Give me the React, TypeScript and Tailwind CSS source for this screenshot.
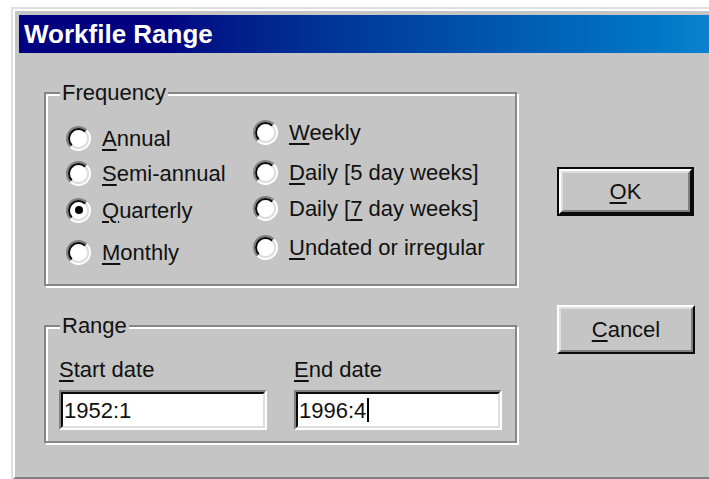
import React from 'react';

// Win95-style "Workfile Range" dialog

type Choice = { label: React.ReactNode; space: string; checked?: boolean };

function Key({ children }: { children: React.ReactNode }) {
  return <u className="underline decoration-2 underline-offset-[3px]">{children}</u>;
}

const leftChoices: Choice[] = [
  { label: <><Key>A</Key>nnual</>, space: 'mt-0' },
  { label: <><Key>S</Key>emi-annual</>, space: 'mt-[5px]' },
  { label: <><Key>Q</Key>uarterly</>, space: 'mt-[7px]', checked: true },
  { label: <><Key>M</Key>onthly</>, space: 'mt-[12px]' },
];

const rightChoices: Choice[] = [
  { label: <><Key>W</Key>eekly</>, space: 'mt-0' },
  { label: <><Key>D</Key>aily [5 day weeks]</>, space: 'mt-[10px]' },
  { label: <>Daily [<Key>7</Key> day weeks]</>, space: 'mt-[6px]' },
  { label: <><Key>U</Key>ndated or irregular</>, space: 'mt-[9px]' },
];

function Radio({ checked }: { checked?: boolean }) {
  return (
    <span className="flex h-[25px] w-[25px] shrink-0 rounded-full border-2 border-t-[#808080] border-l-[#808080] border-r-white border-b-white">
      <span className="flex flex-1 items-center justify-center rounded-full border-2 border-t-[#0a0a0a] border-l-[#0a0a0a] border-r-[#dfdfdf] border-b-[#dfdfdf] bg-white">
        {checked && <span className="h-[8px] w-[8px] rounded-full bg-black" />}
      </span>
    </span>
  );
}

function ChoiceRow({ c }: { c: Choice }) {
  return (
    <div className={`flex h-[30px] items-center gap-[11px] ${c.space}`}>
      <Radio checked={c.checked} />
      <span className="whitespace-nowrap">{c.label}</span>
    </div>
  );
}

function GroupBox({ title, children }: { title: string; children: React.ReactNode }) {
  return (
    <fieldset className="w-[473px] border-2 border-[#868686] shadow-[2px_2px_0_#fff,inset_2px_2px_0_#fff]">
      <legend className="ml-[14px] bg-[#c5c5c5] px-[2px] leading-[24px]">{title}</legend>
      {children}
    </fieldset>
  );
}

function DateField({ label, value, caret }: { label: React.ReactNode; value: string; caret?: boolean }) {
  return (
    <div className="flex flex-col">
      <span className="leading-[24px]">{label}</span>
      <div className="mt-[8px] flex h-[40px] w-[208px] border-2 border-t-[#808080] border-l-[#808080] border-r-white border-b-white">
        <div className="flex flex-1 items-center border-2 border-t-[#0a0a0a] border-l-[#0a0a0a] border-r-[#dfdfdf] border-b-[#dfdfdf] bg-white pl-[1px]">
          <span>{value}</span>
          {caret && <span className="ml-[1px] h-[24px] w-[2px] bg-black" />}
        </div>
      </div>
    </div>
  );
}

function Button({ children, isDefault }: { children: React.ReactNode; isDefault?: boolean }) {
  const bevel = (
    <div className="flex flex-1 border-2 border-t-white border-l-white border-r-[#0a0a0a] border-b-[#0a0a0a]">
      <div className="flex flex-1 items-center justify-center border-2 border-t-[#dfdfdf] border-l-[#dfdfdf] border-r-[#808080] border-b-[#808080]">
        {children}
      </div>
    </div>
  );
  if (isDefault) {
    return <div className="flex h-[49px] w-[137px] border-2 border-[#0a0a0a]">{bevel}</div>;
  }
  return <div className="flex h-[49px] w-[138px]">{bevel}</div>;
}

export default function App() {
  return (
    <div className="h-[479px] w-[709px] overflow-hidden bg-white pl-[11px] pt-[7px] font-['Liberation_Sans',Arial,sans-serif] text-[22px] text-[#111]">
      <div className="flex h-[474px] w-[720px] border-2 border-t-[#dfdfdf] border-l-[#dfdfdf] border-r-[#0a0a0a] border-b-[#0a0a0a]">
        <div className="flex flex-1 flex-col border-2 border-t-white border-l-white border-r-[#808080] border-b-[#808080] bg-[#c5c5c5] p-[4px]">
          <div className="flex h-[38px] items-center bg-gradient-to-r from-[#000080] from-20% to-[#1084d0] pl-[5px] text-[26px] font-bold leading-none text-white">
            Workfile Range
          </div>

          <div className="flex flex-1 pl-[25px]">
            <div className="flex flex-col">
              <div className="mt-[28px]">
                <GroupBox title="Frequency">
                  <div className="grid grid-cols-[187px_1fr] pb-[17px] pl-[20px]">
                    <div className="flex flex-col pt-[18px]">
                      {leftChoices.map((c, i) => (
                        <ChoiceRow key={i} c={c} />
                      ))}
                    </div>
                    <div className="flex flex-col pt-[12px]">
                      {rightChoices.map((c, i) => (
                        <ChoiceRow key={i} c={c} />
                      ))}
                    </div>
                  </div>
                </GroupBox>
              </div>

              <div className="mt-[28px]">
                <GroupBox title="Range">
                  <div className="flex gap-[27px] pb-[11px] pl-[13px] pt-[20px]">
                    <DateField label={<><Key>S</Key>tart date</>} value="1952:1" />
                    <DateField label={<><Key>E</Key>nd date</>} value="1996:4" caret />
                  </div>
                </GroupBox>
              </div>
            </div>

            <div className="ml-[40px] flex flex-col pt-[114px]">
              <Button isDefault>
                <span><Key>O</Key>K</span>
              </Button>
              <div className="mt-[89px]">
                <Button>
                  <span><Key>C</Key>ancel</span>
                </Button>
              </div>
            </div>
          </div>
        </div>
      </div>
    </div>
  );
}
